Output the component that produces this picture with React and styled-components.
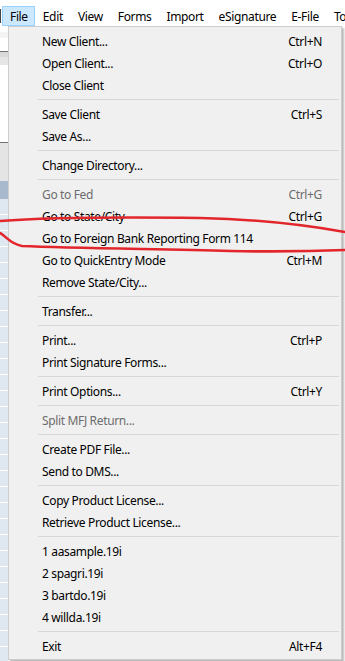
import React from "react"
import styled, { createGlobalStyle } from "styled-components"

const GlobalStyle = createGlobalStyle`
  html, body {
    margin: 0;
    padding: 0;
    background: #ffffff;
  }
  body {
    font-family: "Noto Sans", "Open Sans", sans-serif;
    font-size: 12px;
    letter-spacing: -0.35px;
    color: #000;
  }
`

const menus = ["File", "Edit", "View", "Forms", "Import", "eSignature", "E-File", "Tools"]

// null = separator
const items = [
  { label: "New Client...", key: "Ctrl+N" },
  { label: "Open Client...", key: "Ctrl+O" },
  { label: "Close Client" },
  null,
  { label: "Save Client", key: "Ctrl+S" },
  { label: "Save As..." },
  null,
  { label: "Change Directory..." },
  null,
  { label: "Go to Fed", key: "Ctrl+G", disabled: true },
  { label: "Go to State/City", key: "Ctrl+G" },
  { label: "Go to Foreign Bank Reporting Form 114" },
  { label: "Go to QuickEntry Mode", key: "Ctrl+M" },
  { label: "Remove State/City..." },
  null,
  { label: "Transfer..." },
  null,
  { label: "Print...", key: "Ctrl+P" },
  { label: "Print Signature Forms..." },
  null,
  { label: "Print Options...", key: "Ctrl+Y" },
  null,
  { label: "Split MFJ Return...", disabled: true },
  null,
  { label: "Create PDF File..." },
  { label: "Send to DMS..." },
  null,
  { label: "Copy Product License..." },
  { label: "Retrieve Product License..." },
  null,
  { label: "1 aasample.19i" },
  { label: "2 spagri.19i" },
  { label: "3 bartdo.19i" },
  { label: "4 willda.19i" },
  null,
  { label: "Exit", key: "Alt+F4" },
]

const strips = [
  { h: 6, bg: "#ffffff" },
  { h: 6, bg: "#f4f4f4" },
  { h: 13, bg: "#ffffff", line: true },
  { h: 5, bg: "#d9d9d9" },
  { h: 8, bg: "#e6e6e6" },
  { h: 25, bg: "#ffffff" },
  { h: 52, bg: "#ffffff", line: true },
  { h: 38, bg: "#e4e4e4" },
  { h: 18, bg: "#a9b9cd" },
]

export default function App() {
  return (
    <>
      <GlobalStyle />
      <Window>
        <TitleStrip />
        <MenuBar>
          <AppIcon />
          {menus.map((m, i) => (
            <MenuTitle key={m} active={i === 0}>{m}</MenuTitle>
          ))}
        </MenuBar>
        <Body>
          <LeftPane>
            {strips.map((s, i) => (
              <Strip key={i} h={s.h} bg={s.bg} line={s.line} />
            ))}
            <Rows />
          </LeftPane>
        </Body>

        <Dropdown>
          {items.map((it, i) =>
            it ? (
              <Item key={i} disabled={it.disabled}>
                <span>{it.label}</span>
                {it.key && <Shortcut>{it.key}</Shortcut>}
              </Item>
            ) : (
              <Separator key={i} />
            )
          )}
        </Dropdown>

        <Scribble viewBox="0 0 345 661" width="345" height="661">
          <path
            d="M0 221 C 40 218, 120 217, 200 218 C 250 219, 300 224, 345 232"
            fill="none"
            stroke="#e3262b"
            strokeWidth="2.6"
            strokeLinecap="round"
          />
          <path
            d="M0 233 C 6 236, 10 244, 22 246 C 70 248, 150 249, 230 251 C 280 252, 320 251, 345 250"
            fill="none"
            stroke="#e3262b"
            strokeWidth="2.6"
            strokeLinecap="round"
          />
        </Scribble>
      </Window>
    </>
  )
}

const Window = styled.div`
  position: relative;
  width: 345px;
  height: 661px;
  overflow: hidden;
  background: #ffffff;
`

const TitleStrip = styled.div`
  height: 6px;
  background: #ffffff;
`

const MenuBar = styled.div`
  display: flex;
  align-items: center;
  height: 20px;
  white-space: nowrap;
`

const AppIcon = styled.div`
  width: 6px;
  height: 14px;
  margin-right: 1px;
  border: 1px solid #444;
  border-left: none;
  box-sizing: border-box;
  background: #e8e8e8;
`

const MenuTitle = styled.div`
  height: 20px;
  line-height: 19px;
  padding: 0 6px 0 7px;
  box-sizing: border-box;
  border: 1px solid ${(p) => (p.active ? "#99d1ff" : "transparent")};
  background: ${(p) => (p.active ? "#cce8ff" : "transparent")};
`

const Body = styled.div`
  display: flex;
  height: 635px;
`

const LeftPane = styled.div`
  width: 8px;
  display: flex;
  flex-direction: column;
`

const Strip = styled.div`
  height: ${(p) => p.h}px;
  background: ${(p) => p.bg};
  border-bottom: ${(p) => (p.line ? "1px solid #6f6f6f" : "none")};
`

const Rows = styled.div`
  flex: 1;
  background: repeating-linear-gradient(
    to bottom,
    #dfe7f1 0px,
    #dfe7f1 15px,
    #ffffff 15px,
    #ffffff 16px
  );
`

const Dropdown = styled.div`
  position: absolute;
  left: 8px;
  top: 26px;
  width: 334px;
  box-sizing: border-box;
  padding: 3px 0 2px;
  background: #f0f0f0;
  border: 1px solid #cccccc;
  box-shadow: 2px 2px 2px rgba(0, 0, 0, 0.28);
`

const Item = styled.div`
  display: flex;
  justify-content: space-between;
  align-items: center;
  height: 22px;
  padding: 0 19px 0 33px;
  white-space: nowrap;
  color: ${(p) => (p.disabled ? "#6d6d6d" : "#000000")};
`

const Shortcut = styled.span``

const Separator = styled.div`
  height: 1px;
  margin: 3px 2px 3px 29px;
  background: #d7d7d7;
`

const Scribble = styled.svg`
  position: absolute;
  left: 0;
  top: 0;
  pointer-events: none;
`
